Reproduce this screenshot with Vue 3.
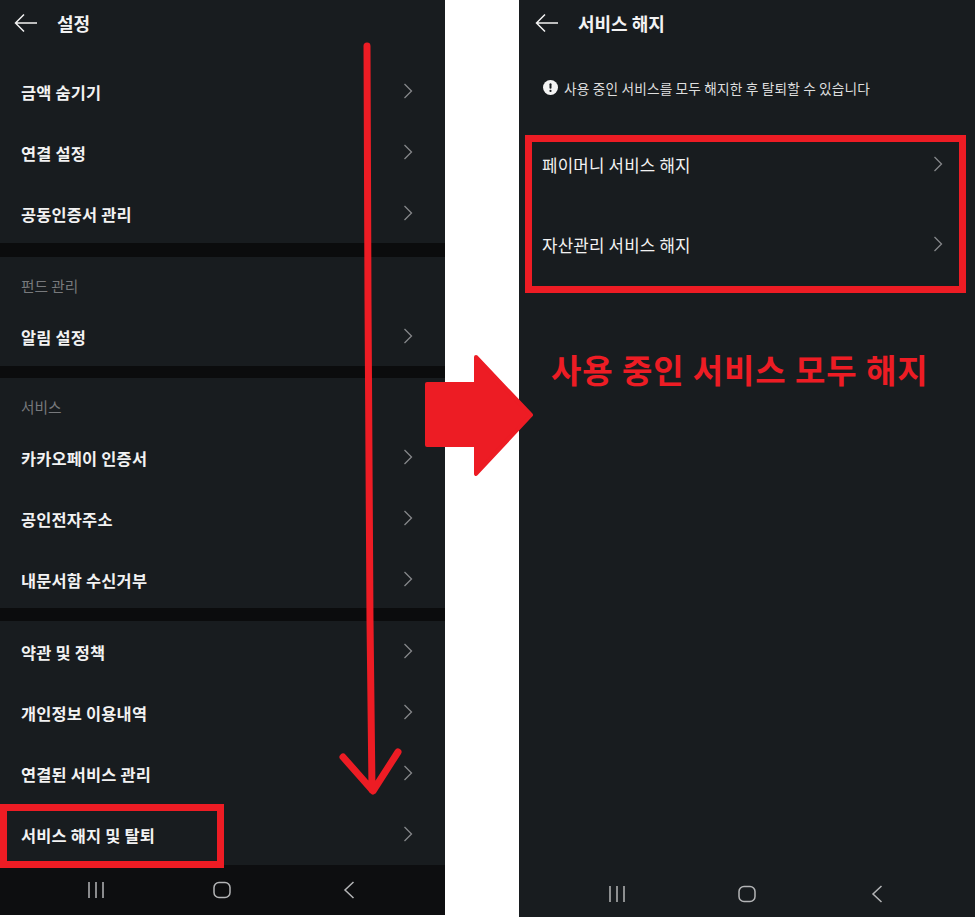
<script setup>
const sections = [
  { items: ['금액 숨기기', '연결 설정', '공동인증서 관리'] },
  { label: '펀드 관리', items: ['알림 설정'] },
  { label: '서비스', items: ['카카오페이 인증서', '공인전자주소', '내문서함 수신거부'] },
  { items: ['약관 및 정책', '개인정보 이용내역', '연결된 서비스 관리', '서비스 해지 및 탈퇴'] }
]
const cancelRows = ['페이머니 서비스 해지', '자산관리 서비스 해지']
</script>

<template>
  <div class="page">
    <div class="phone phone-left">
      <div class="header">
        <svg class="back" width="24" height="20" viewBox="0 0 24 20"><path d="M23 10H2M10 1.500 1.500 10l8.500 8.500" /></svg>
        <span class="title">설정</span>
      </div>
      <div class="sections">
        <section v-for="(s, i) in sections" :key="i" class="section">
          <div v-if="s.label" class="section-label">{{ s.label }}</div>
          <div v-for="item in s.items" :key="item" class="row">
            <span>{{ item }}</span>
            <svg class="chev" width="10" height="16" viewBox="0 0 10 16"><path d="M1.500 1 8.500 8l-7 7" /></svg>
          </div>
        </section>
      </div>
      <div class="nav nav-dark">
        <svg width="18" height="18" viewBox="0 0 18 18"><path d="M2 1v16M9 1v16M16 1v16" /></svg>
        <svg width="18" height="18" viewBox="0 0 18 18"><rect x="1" y="1.500" width="16" height="15" rx="5" /></svg>
        <svg width="12" height="18" viewBox="0 0 12 18"><path d="M10.500 1 2 9l8.500 8" /></svg>
      </div>
    </div>

    <div class="phone phone-right">
      <div class="header">
        <svg class="back back-right" width="24" height="20" viewBox="0 0 24 20"><path d="M23 10H2M10 1.500 1.500 10l8.500 8.500" /></svg>
        <span class="title">서비스 해지</span>
      </div>
      <div class="notice">
        <svg width="15" height="15" viewBox="0 0 15 15">
          <circle cx="7.500" cy="7.500" r="7.500" fill="#f4f4f4" />
          <rect x="6.500" y="3.200" width="2" height="5.600" rx="1" fill="#181c1f" />
          <circle cx="7.500" cy="10.900" r="1.100" fill="#181c1f" />
        </svg>
        <span>사용 중인 서비스를 모두 해지한 후 탈퇴할 수 있습니다</span>
      </div>
      <div class="cancel-box">
        <div v-for="r in cancelRows" :key="r" class="cancel-row">
          <span>{{ r }}</span>
          <svg class="chev" width="10" height="16" viewBox="0 0 10 16"><path d="M1.500 1 8.500 8l-7 7" /></svg>
        </div>
      </div>
      <div class="headline">사용 중인 서비스 모두 해지</div>
      <div class="nav nav-right">
        <svg width="18" height="18" viewBox="0 0 18 18"><path d="M2 1v16M9 1v16M16 1v16" /></svg>
        <svg width="18" height="18" viewBox="0 0 18 18"><rect x="1" y="1.500" width="16" height="15" rx="5" /></svg>
        <svg width="12" height="18" viewBox="0 0 12 18"><path d="M10.500 1 2 9l8.500 8" /></svg>
      </div>
    </div>

    <!-- red marks drawn over the screenshots -->
    <svg class="marks" width="975" height="923" viewBox="0 0 975 923">
      <path class="mark-line" d="M367 46 368 300 370 620 372 790M343 757 373 791 398 752" />
      <path class="mark-arrow" d="M427 384H476V357L531 415 476 474V445H427Z" />
    </svg>
    <div class="exit-box"></div>
  </div>
</template>

<style>
html, body {
  margin: 0;
  background: #fff;
}
</style>

<style scoped>
.page {
  position: relative;
  width: 975px;
  height: 923px;
  display: flex;
  justify-content: space-between;
  align-items: flex-start;
  background: #fff;
  font-family: "Noto Sans CJK KR", "Noto Sans", sans-serif;
  color: #f2f2f2;
  overflow: hidden;
}

.phone {
  display: flex;
  flex-direction: column;
  background: #181c1f;
}

.phone-left {
  width: 445px;
  height: 915px;
}

.phone-right {
  width: 456px;
  height: 917px;
}

.header {
  height: 46px;
  flex: none;
  display: flex;
  align-items: center;
  padding-left: 14px;
}

.back {
  margin-right: 19px;
  fill: none;
  stroke: #f2f2f2;
  stroke-width: 1.500;
}

.back-right {
  margin-left: 2px;
  margin-right: 19px;
}

.title {
  font-size: 18px;
  font-weight: 700;
  line-height: 46px;
}

.sections {
  flex: 1;
  padding-top: 15px;
}

/* the dark bands between groups are not all the same height in the capture */
.section:nth-child(2) {
  margin-top: -1px;
  border-top: 14px solid #0b0c0d;
}

.section:nth-child(3) {
  margin-top: -1px;
  border-top: 12px solid #0b0c0d;
}

.section:nth-child(4) {
  margin-top: -2px;
  border-top: 13px solid #0b0c0d;
}

.section-label {
  height: 49px;
  display: flex;
  align-items: center;
  padding-left: 21px;
  padding-top: 8px;
  box-sizing: border-box;
  font-size: 14.700px;
  color: #77797c;
}

.row {
  height: 61px;
  display: flex;
  align-items: center;
  justify-content: space-between;
  padding: 0 32px 0 21px;
  font-size: 16.400px;
  font-weight: 700;
  letter-spacing: 0.2px;
}

.chev {
  flex: none;
  margin-top: -2px;
  fill: none;
  stroke: #85878a;
  stroke-width: 1.300;
}

.nav {
  display: flex;
  align-items: center;
  flex: none;
}

.nav svg {
  fill: none;
  stroke: #b4b5b7;
  stroke-width: 1.500;
}

.nav-dark {
  height: 50px;
  gap: 108px;
  padding-left: 87px;
  background: #0d0e10;
}

.nav-dark svg:last-child {
  margin-left: 4px;
}

.nav-right {
  margin-top: auto;
  height: 50px;
  box-sizing: border-box;
  padding: 4px 0 0 89px;
  gap: 112px;
}

.nav-right svg:last-child {
  margin-left: 3px;
}

.notice {
  height: 89px;
  flex: none;
  display: flex;
  align-items: center;
  gap: 6px;
  padding: 0 0 6px 24px;
  box-sizing: border-box;
  font-size: 13.700px;
  letter-spacing: 0.15px;
  color: #dedede;
}

.cancel-box {
  margin: 0 9px 0 6px;
  height: 158px;
  box-sizing: border-box;
  border: 7px solid #ed1c24;
  display: flex;
  flex-direction: column;
  gap: 34px;
  padding: 0 16px 0 10px;
}

.cancel-row {
  height: 46px;
  padding-bottom: 1px;
  box-sizing: border-box;
  display: flex;
  align-items: center;
  justify-content: space-between;
  font-size: 16.800px;
  letter-spacing: 0.2px;
}

.headline {
  margin: 53px 0 0 32px;
  font-size: 33px;
  line-height: 46px;
  font-weight: 700;
  letter-spacing: 0.9px;
  color: #ed1c24;
  white-space: nowrap;
}

.marks {
  position: absolute;
  left: 0;
  top: 0;
  pointer-events: none;
}

.mark-line {
  fill: none;
  stroke: #ed1c24;
  stroke-width: 7;
  stroke-linecap: round;
  stroke-linejoin: round;
}

.mark-arrow {
  fill: #ed1c24;
  stroke: #ed1c24;
  stroke-width: 4;
  stroke-linejoin: round;
}

.exit-box {
  position: absolute;
  left: 0;
  top: 804px;
  width: 224px;
  height: 64px;
  box-sizing: border-box;
  border: 7px solid #ed1c24;
}
</style>
